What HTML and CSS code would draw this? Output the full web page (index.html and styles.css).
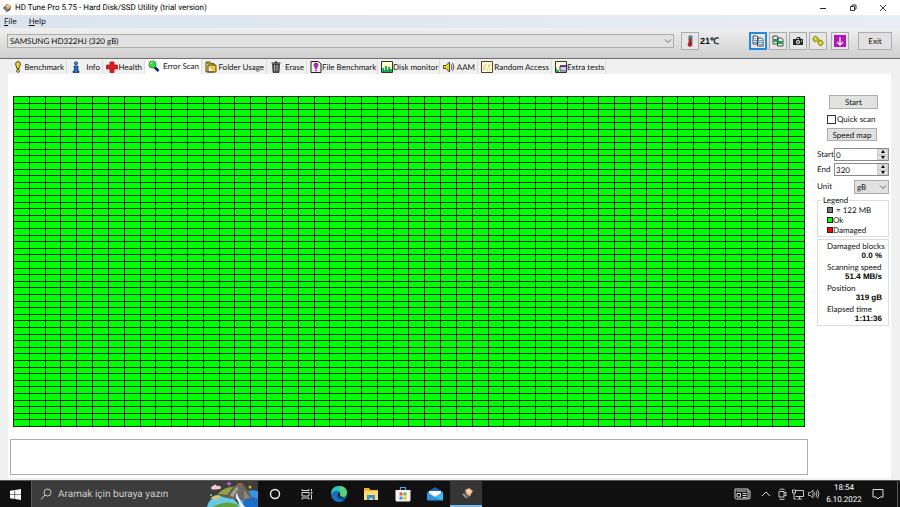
FILE: index.html
```
<!DOCTYPE html>
<html lang="tr">
<head>
    <meta charset="UTF-8">
    <meta name="viewport" content="width=device-width, initial-scale=1.0">
    <title>HD Tune Pro</title>
    <link rel="stylesheet" href="styles.css">
</head>
<body>
    <header class="titlebar">
        <svg class="app-icon" viewBox="0 0 10 10">
            <path d="M1 5 5 1l4 2-1 4-3 2z" fill="#3c332c"/>
            <path d="M3 3 6 1l3 2-3 4z" fill="#e9bd85"/>
            <path d="M1 5l2-1 3 3-1 2z" fill="#8b8378"/>
        </svg>
        <h1>HD Tune Pro 5.75 - Hard Disk/SSD Utility (trial version)</h1>
        <div class="window-buttons">
            <button aria-label="Minimize"><svg viewBox="0 0 10 10"><path d="M2 5.5h6" stroke="#222"/></svg></button>
            <button aria-label="Restore"><svg viewBox="0 0 10 10"><path d="M2.5 3.5h4v4h-4zM4 3.500V2h4v4H6.500" fill="none" stroke="#222" stroke-width=".9"/></svg></button>
            <button aria-label="Close"><svg viewBox="0 0 10 10"><path d="M2 2l6 6M8 2L2 8" stroke="#222" stroke-width=".9"/></svg></button>
        </div>
    </header>

    <nav class="menubar">
        <a href="#"><u>F</u>ile</a>
        <a href="#"><u>H</u>elp</a>
    </nav>

    <div class="toolbar">
        <div class="select-wrap drive">
            <select aria-label="Drive">
                <option>SAMSUNG HD322HJ (320 gB)</option>
            </select>
            <svg viewBox="0 0 8 8"><path d="M1 2.500l3 3 3-3" fill="none" stroke="#555" stroke-width=".8"/></svg>
        </div>
        <button class="tool" aria-label="Temperature">
            <svg viewBox="0 0 12 12"><path d="M5 1h3v7H5z" fill="#38bfc4" stroke="#222" stroke-width=".6"/><path d="M5 3h2v6H5z" fill="#d31818"/><circle cx="6" cy="9.500" r="2" fill="#d31818" stroke="#501010" stroke-width=".5"/></svg>
        </button>
        <strong class="temperature">21℃</strong>
        <div class="tools">
            <button class="tool selected" aria-label="Copy text">
                <svg viewBox="0 0 12 12"><path d="M1 1h4l1 1v7H1zM5.500 3h4l1.500 1.500V11H5.500z" fill="#eef7ff" stroke="#222" stroke-width=".8"/><path d="M2 3.500h2M2 5.500h3M2 7.500h3M7 5.500h3M7 7.500h3M7 9.500h3" stroke="#2688dd" stroke-width=".8"/></svg>
            </button>
            <button class="tool" aria-label="Copy screenshot">
                <svg viewBox="0 0 12 12"><path d="M1 1h4l1 1v7H1zM5.500 3h4l1.500 1.500V11H5.500z" fill="#eee" stroke="#222" stroke-width=".8"/><path d="M1.500 4h4v3h-4zM6 6h4.500v3H6z" fill="#1ca83a"/><path d="M2 4h2v1H2zM7 6h2v1H7z" fill="#2470c8"/></svg>
            </button>
            <button class="tool" aria-label="Save screenshot">
                <svg viewBox="0 0 12 12"><path d="M1 4h3l1-2h3l1 2h2v6H1z" fill="#292929"/><path d="M5 3h2v1H5z" fill="#ddd"/><circle cx="6" cy="7" r="2" fill="#eee"/><circle cx="6" cy="7" r="1" fill="#444"/><path d="M9 5h1v2H9z" fill="#3dd33d"/></svg>
            </button>
            <button class="tool" aria-label="Options">
                <svg viewBox="0 0 12 12"><path d="M1 3l2-2 2 1 2 2-1 2-3 1-2-2zM6 6l3-1 2 2v2L9 11 6 9z" fill="#c6bd14" stroke="#77720c" stroke-width=".7"/><path d="M4 5l4 3" stroke="#c6bd14" stroke-width="2"/><circle cx="3.500" cy="3.500" r="1" fill="#f1eda0"/><circle cx="8.500" cy="8" r="1" fill="#f1eda0"/></svg>
            </button>
            <button class="tool update" aria-label="Update">
                <svg viewBox="0 0 12 12"><path d="M0 0h12v12H0z" fill="#b414b8"/><path d="M6 2v8M3 7l3 3 3-3" fill="none" stroke="#fff" stroke-width="1.300"/></svg>
            </button>
        </div>
        <button class="exit">Exit</button>
    </div>

    <nav class="tabs">
        <a href="#"><svg viewBox="0 0 12 12"><path d="M3.500 3Q4 .5 6 .5T8.500 3L7 7.500H5z" fill="#e8dc20" stroke="#222" stroke-width=".8"/><circle cx="6" cy="9.800" r="1.500" fill="#e8dc20" stroke="#222" stroke-width=".7"/></svg>Benchmark</a>
        <a href="#"><svg viewBox="0 0 12 12"><circle cx="6" cy="2.300" r="1.600" fill="#1d8be6" stroke="#123" stroke-width=".6"/><path d="M4 5h4v5h1v1.500H3V10h1.500V6.500H4z" fill="#1d70d8" stroke="#123" stroke-width=".7"/></svg>Info</a>
        <a href="#"><svg viewBox="0 0 12 12"><path d="M4 1h4v3h3.500v4H8v3.500H4V8H.5V4H4z" fill="#e01c20" stroke="#8c1518" stroke-width=".7"/></svg>Health</a>
        <a href="#" class="active"><svg viewBox="0 0 12 12"><path d="M6.500 7l4 4" stroke="#10208a" stroke-width="2.600"/><circle cx="4.500" cy="4.500" r="3.600" fill="#35df42" stroke="#2a7b36" stroke-width=".8"/><path d="M2.500 4q0-1.500 2-2" fill="none" stroke="#c6ffc8"/></svg>Error Scan</a>
        <a href="#"><svg viewBox="0 0 12 12"><path d="M1 3V1h4l1 1.500h3V4" fill="#b29a1c" stroke="#4c4210" stroke-width=".8"/><path d="M1 3v8h8M3 4h8v7H3z" fill="#eccb34" stroke="#4c4210" stroke-width=".9"/></svg>Folder Usage</a>
        <a href="#"><svg viewBox="0 0 12 12"><path d="M1.500 2h9M5 1h2" stroke="#222" stroke-width="1.200"/><path d="M2.500 3h7L9 11.500H3z" fill="#555" stroke="#222" stroke-width=".7"/><path d="M4.500 4v6M7 4v6" stroke="#bbb" stroke-width=".8"/></svg>Erase</a>
        <a href="#"><svg viewBox="0 0 12 12"><path d="M1 .5h7.500L11 3v8.500H1z" fill="#eee" stroke="#222"/><path d="M4 4q0-2 2-2t2 2L6.500 7.500h-1z" fill="#c41bc8" stroke="#551058" stroke-width=".6"/><circle cx="6" cy="9.500" r="1" fill="#c41bc8"/></svg>File Benchmark</a>
        <a href="#"><svg viewBox="0 0 12 12"><path d="M.5.5h11v11H.5z" fill="#ffffd0" stroke="#333"/><path d="M1 11V7h2v2h1V5h2v4h1V6h2v2h2v3z" fill="#16bd2c"/><path d="M2 9h1v2H2zM5 8h1v3H5zM8 8h1v3H8z" fill="#2366dd"/></svg>Disk monitor</a>
        <a href="#"><svg viewBox="0 0 12 12"><path d="M.5 4.500H3L6.500 1v10L3 7.500H.5z" fill="#e1d51b" stroke="#222" stroke-width=".8"/><path d="M8 3.500q2 2.500 0 5M9.500 2q3 4 0 8" fill="none" stroke="#222" stroke-width=".8"/></svg>AAM</a>
        <a href="#"><svg viewBox="0 0 12 12"><path d="M.5.5h11v11H.5z" fill="#fff9cf" stroke="#444"/><path d="M2 9l2-2M4 4h1M7 6l2-3M3 6h1M8 8h1M6 9h1" stroke="#e39a3a"/></svg>Random Access</a>
        <a href="#"><svg viewBox="0 0 12 12"><path d="M.5.5h11v11H.5z" fill="#ffffd0" stroke="#333"/><path d="M1 11V7h1v2h2v2z" fill="#16bd2c"/><path d="M5 5h6.500v5H5z" fill="#edc3cc" stroke="#1d2d9d" stroke-width=".9"/><path d="M5 5h6.500" stroke="#1d2d9d" stroke-width="1.500"/></svg>Extra tests</a>
    </nav>

    <main class="panel">
        <section class="scan">
            <div class="blocks" id="blocks"></div>
            <div class="log"></div>
        </section>

        <aside class="sidebar">
            <button class="start">Start</button>
            <label class="quick"><input type="checkbox"> Quick scan</label>
            <button class="speed">Speed map</button>

            <div class="field">
                <label for="start">Start</label>
                <div class="spinner">
                    <input id="start" type="text" value="0">
                    <div class="arrows">
                        <button aria-label="Start up"><svg viewBox="0 0 6 4"><path d="M3 0l2 3H1z"/></svg></button>
                        <button aria-label="Start down"><svg viewBox="0 0 6 4"><path d="M3 4l2-3H1z"/></svg></button>
                    </div>
                </div>
            </div>
            <div class="field">
                <label for="end">End</label>
                <div class="spinner">
                    <input id="end" type="text" value="320">
                    <div class="arrows">
                        <button aria-label="End up"><svg viewBox="0 0 6 4"><path d="M3 0l2 3H1z"/></svg></button>
                        <button aria-label="End down"><svg viewBox="0 0 6 4"><path d="M3 4l2-3H1z"/></svg></button>
                    </div>
                </div>
            </div>
            <div class="field unit">
                <label for="unit">Unit</label>
                <div class="select-wrap">
                    <select id="unit">
                        <option>gB</option>
                    </select>
                    <svg viewBox="0 0 8 8"><path d="M1 2.500l3 3 3-3" fill="none" stroke="#444" stroke-width=".8"/></svg>
                </div>
            </div>

            <fieldset class="legend">
                <legend>Legend</legend>
                <ul>
                    <li class="size"><i class="gray"></i>= 122 MB</li>
                    <li><i class="green"></i>Ok</li>
                    <li><i class="red"></i>Damaged</li>
                </ul>
            </fieldset>

            <dl class="stats">
                <dt>Damaged blocks</dt>
                <dd>0.0 %</dd>
                <dt>Scanning speed</dt>
                <dd>51.4 MB/s</dd>
                <dt>Position</dt>
                <dd>319 gB</dd>
                <dt>Elapsed time</dt>
                <dd>1:11:36</dd>
            </dl>
        </aside>
    </main>

    <footer class="taskbar">
        <button class="win" aria-label="Başlat"><svg viewBox="0 0 12 12"><path d="M0 2l5-.8v4.500H0zM5.600 1.100L12 0v5.700H5.600zM0 6.300h5v4.500L0 10zM5.600 6.300H12V12l-6.400-1z" fill="#fff"/></svg></button>
        <div class="search">
            <svg class="lens" viewBox="0 0 12 12"><circle cx="7.500" cy="4.500" r="3.500" fill="none" stroke="#ccc"/><path d="M5 7l-4 4.500" stroke="#ccc"/></svg>
            <input type="text" placeholder="Aramak için buraya yazın" aria-label="Ara">
            <svg class="scene" viewBox="0 0 51 26">
                <path d="M35 12q8-4 16-2v16H32z" fill="#3597e3"/>
                <path d="M38 18q7-4 13 0v8H34z" fill="#1c6fc6"/>
                <path d="M0 26q1-8 12-12l14 3 8 9z" fill="#68c8e8"/>
                <path d="M3 17q6-4 12-3l-5 5z" fill="#d4c37a"/>
                <path d="M10 13q6-6 16-8l10-2 5 6 4 8q-6 3-14 1-12 0-20-4z" fill="#596047"/>
                <path d="M11 13q6-7 15-7l-6 8z" fill="#91a340"/>
                <path d="M20 17l11-15h4l4 8 6 7-12 1z" fill="#6d6561"/>
                <path d="M23 14l7-9 1 3-5 8z" fill="#a8a29a"/>
                <path d="M31 2h4l1 3-3-1-3 1z" fill="#b8553d"/>
                <path d="M33 8q-4 3-2 7t7 11h-5q-1-5-4-9-1-4 4-9z" fill="#e5edf0"/>
                <path d="M7 25q11-6 22-2l3 3H6z" fill="#61a43b"/>
                <path d="M37 9l6 8-6 1z" fill="#8d8680"/>
                <path d="M4 7q0-2 2-2 2-3 4 0 4-1 4 2 0 1-5 1.500T4 7z" fill="#f0c6cf"/>
                <path d="M22 0l1 2 2 .5-2 1-1 2-1-2-2-1 2-.5z" fill="#c65fe5"/>
                <circle cx="43" cy="6" r="1.500" fill="#f1aa13"/>
                <circle cx="4" cy="14" r="1" fill="#61d7dd"/>
            </svg>
        </div>
        <div class="apps">
            <button aria-label="Cortana"><svg viewBox="0 0 16 16"><circle cx="8" cy="8" r="4.500" fill="none" stroke="#eee" stroke-width="1.400"/></svg></button>
            <button aria-label="Görev Görünümü"><svg viewBox="0 0 16 16"><path d="M3 3v1.500h7V3M3 6.500h7v3.500H3zM3 13.500V12h7v1.500M12.500 3v2M12.500 8.500v5" fill="none" stroke="#ddd"/><circle cx="12.500" cy="6.800" r="1" fill="#ddd"/></svg></button>
            <button aria-label="Edge"><svg viewBox="0 0 16 16"><circle cx="8" cy="8" r="8" fill="#1771bd"/><path d="M0 7Q1 0 8 0q7 0 8 6 0 5-5 5-3 0-2-2 1-3-2-4Q3 4 0 8z" fill="#2fc2bd"/><path d="M9 0q7 1 7 7-1 4-5 4-3 0-2-2 2-4-1-6z" fill="#5ad375"/><path d="M6 7q-3 6 7 7 2-1 2-3-3 2-6 1Q5 11 6 7z" fill="#124b99"/><path d="M7 7q2-1 2 1-1 3 4 3-4 2-6-1z" fill="#101010"/></svg></button>
            <button aria-label="Dosya Gezgini"><svg viewBox="0 0 16 16"><path d="M1 2h5l1.500 2H15v10H1z" fill="#f0b52f"/><path d="M1 5h14v9H1z" fill="#ffdc70"/><path d="M4 14V9h8v5h-2.500v-2h-3v2z" fill="#3e91d5"/></svg></button>
            <button aria-label="Store"><svg viewBox="0 0 16 16"><path d="M5.500 4V1.500h5V4" fill="none" stroke="#3bb0ed" stroke-width="1.200"/><path d="M.5 4h15v10q0 1.500-1.500 1.500H2Q.5 15.500.5 14z" fill="#f4f4f4"/><path d="M4.500 6.500h3v3h-3z" fill="#ee5238"/><path d="M8.500 6.500h3v3h-3z" fill="#75b82e"/><path d="M4.500 10.500h3v3h-3z" fill="#27a0e5"/><path d="M8.500 10.500h3v3h-3z" fill="#f6b91c"/></svg></button>
            <button aria-label="Posta"><svg viewBox="0 0 16 16"><path d="M0 6l8-5 8 5v8H0z" fill="#1265ae"/><path d="M2 5h12v6H2z" fill="#fff"/><path d="M0 6l8 5 8-5v8.500H0z" fill="#2795e5"/><path d="M8 11l8-5v8.500z" fill="#46b5f4"/></svg></button>
            <button class="running" aria-label="HD Tune Pro"><svg viewBox="0 0 16 16"><path d="M3 8l4-3 5 4-3 4-3-1z" fill="#5d5650"/><path d="M6 4l4-2 4 3-3 5-3-1z" fill="#e3b37d"/><circle cx="10" cy="5.500" r="2" fill="#f7dcbc"/><path d="M3 8l2 0 3 3-1 1z" fill="#a9a39c"/></svg></button>
        </div>
        <div class="tray">
            <svg class="news" viewBox="0 0 16 12"><path d="M.5 1h13v10H2Q.5 11 .5 9.500zM13.500 3h2v7q0 1-1.500 1" fill="none" stroke="#ddd"/><path d="M2 3h10M8 5.500h4M8 7.500h4M8 9.500h4" stroke="#ddd"/><path d="M2.500 5.500H6v3.500H2.500z" fill="none" stroke="#ddd"/></svg>
            <svg viewBox="0 0 12 12"><path d="M2 8l4-4 4 4" fill="none" stroke="#ddd"/></svg>
            <svg viewBox="0 0 12 12"><path d="M3 3.500h5v5.500H3zM8 5l2-1v4L8 7M3.500 1.500q2.500-1 5 0M3.500 11q2.500 1 5 0" fill="none" stroke="#ddd" stroke-width=".9"/></svg>
            <svg viewBox="0 0 12 12"><path d="M3.500 2.500h8v6h-8M5 11h5M7.500 8.500V11M.5 2h3v3h-3zM2 5v6h2" fill="none" stroke="#ddd" stroke-width=".9"/></svg>
            <svg viewBox="0 0 12 12"><path d="M.5 4.500h2L5 2v8L2.500 7.500h-2zM6.500 4.500q1 1.500 0 3M8 3q2 3 0 6M9.500 1.500q3 4.500 0 9" fill="none" stroke="#ddd" stroke-width=".8"/></svg>
            <div class="clock">
                <span>18:54</span>
                <span>6.10.2022</span>
            </div>
            <svg class="notice" viewBox="0 0 12 12"><path d="M1 1.500h10v7.500H8L6 11 4 9H1z" fill="none" stroke="#ddd"/></svg>
        </div>
    </footer>

    <script>
        // 50 x 50 surface map, every block scanned ok
        const blocks = document.getElementById('blocks');
        for (let i = 0; i < 50 * 50; i++) {
            blocks.appendChild(document.createElement('span'));
        }
    </script>
</body>
</html>
```
FILE: styles.css
```
* {
    margin: 0;
    padding: 0;
    box-sizing: border-box;
}

body {
    min-height: 100vh;
    display: flex;
    flex-direction: column;
    background-color: #f0f0f0;
    color: #111;
    font-family: Lato, "Liberation Sans", sans-serif;
    font-size: 8px;
    line-height: 10px;
    text-rendering: geometricPrecision;
}

svg {
    display: block;
    flex: none;
}

a {
    color: inherit;
    text-decoration: none;
}

button,
input,
select {
    font: inherit;
    color: inherit;
    text-rendering: inherit;
}

button {
    border: 1px solid #adadad;
    background-color: #e1e1e1;
}

/* Title and menu */

.titlebar {
    display: flex;
    align-items: center;
    height: 15px;
    padding-left: 2px;
    background-color: #fff;
}

.app-icon {
    width: 10px;
    height: 10px;
}

.titlebar h1 {
    flex: 1;
    margin-left: 3px;
    font-family: Roboto, sans-serif;
    font-size: 8px;
    font-weight: normal;
    color: #000;
}

.window-buttons {
    display: flex;
    margin-right: 2px;
}

.window-buttons button {
    display: flex;
    align-items: center;
    justify-content: center;
    width: 30px;
    height: 14px;
    border: none;
    background: none;
}

.window-buttons svg {
    width: 10px;
    height: 10px;
}

.menubar {
    display: flex;
    gap: 12px;
    height: 13px;
    padding: 2px 4px;
    background: linear-gradient(to right, #dbe4ed, #e9edf5);
    font-family: "Open Sans", sans-serif;
    color: #000;
}

/* Toolbar */

.toolbar {
    display: flex;
    align-items: center;
    height: 31px;
    padding: 0 8px 4px 7px;
    border-bottom: 1px solid #6c6c6c;
    background: linear-gradient(#f0f0f0, #cfcfcf);
}

.select-wrap {
    position: relative;
}

.select-wrap select {
    display: block;
    width: 100%;
    height: 14px;
    padding-left: 2px;
    appearance: none;
    border: 1px solid #adadad;
    border-radius: 0;
    background-color: #e1e1e1;
}

.select-wrap svg {
    position: absolute;
    top: 3px;
    right: 2px;
    width: 8px;
    height: 8px;
    pointer-events: none;
}

.drive {
    flex: 1;
}

.tool {
    display: flex;
    align-items: center;
    justify-content: center;
    width: 18px;
    height: 18px;
    background-color: #e6e6e6;
}

.tool svg {
    width: 12px;
    height: 12px;
}

.drive + .tool {
    margin-left: 7px;
}

.tool.selected {
    border: 2px solid #2389dc;
}

.tool.update {
    margin-left: 2px;
}

.temperature {
    width: 49px;
    margin-left: 1px;
    font-family: "Liberation Sans", sans-serif;
    font-size: 9px;
    color: #111;
}

.tools {
    display: flex;
    gap: 2px;
}

.exit {
    width: 34px;
    height: 18px;
    margin-left: 9px;
}

/* Tabs */

.tabs {
    display: grid;
    grid-template-columns: 58px 36px 42px 57px 65px 40px 71px 62px 38px 74px 54px;
    height: 15px;
    padding-left: 9px;
}

.tabs a {
    display: flex;
    align-items: center;
    justify-content: space-between;
    margin-top: 1px;
    padding: 0 2px 0 3px;
    border-right: 1px solid #dcdcdc;
    white-space: nowrap;
}

.tabs svg {
    width: 12px;
    height: 12px;
}

.tabs .active {
    margin-top: 0;
    padding-bottom: 2px;
    background-color: #fff;
}

/* Scan panel */

.panel {
    flex: 1;
    display: flex;
    margin: 0 9px 2px 8px;
    padding-right: 2px;
    background-color: #fff;
}

.scan {
    flex: 1;
    display: flex;
    flex-direction: column;
    padding: 22px 9px 3px 2px;
}

.blocks {
    flex: 1;
    display: grid;
    grid-template-columns: repeat(50, 1fr);
    grid-template-rows: repeat(50, 1fr);
    margin: 0 3px;
    border-top: 1px solid #053005;
    border-left: 1px solid #053005;
    background-color: #0f0;
}

.blocks span {
    border-right: 1px solid #053005;
    border-bottom: 1px solid #053005;
}

.log {
    height: 36px;
    margin-top: 12px;
    border: 1px solid #aaabb3;
}

.sidebar {
    display: flex;
    flex-direction: column;
    width: 72px;
    padding-top: 21px;
}

.start {
    width: 49px;
    height: 14px;
    margin-left: 12px;
}

.quick {
    display: flex;
    align-items: center;
    gap: 1px;
    margin: 5px 0 4px 10px;
    white-space: nowrap;
}

.quick input {
    width: 9px;
    height: 9px;
    appearance: none;
    border: 1px solid #333;
    background-color: #fff;
}

.speed {
    width: 50px;
    height: 13px;
    margin: 0 0 7px 10px;
}

.field {
    display: flex;
    justify-content: space-between;
    margin-bottom: 2px;
}

.field label {
    padding-top: 1px;
}

.spinner {
    display: flex;
    flex: none;
    width: 55px;
    height: 13px;
    border: 1px solid #8a8a8a;
}

.spinner input {
    flex: 1;
    min-width: 0;
    padding-left: 1px;
    border: none;
}

.arrows {
    display: flex;
    flex-direction: column;
    width: 11px;
}

.arrows button {
    display: flex;
    flex: 1;
    align-items: center;
    justify-content: center;
    min-height: 0;
    border-color: #ccc;
}

.arrows svg {
    width: 6px;
    height: 4px;
}

.unit {
    margin: 2px 0 0;
}

.unit .select-wrap {
    width: 35px;
}

.legend {
    margin-top: 1px;
    padding: 0 0 1px 9px;
    border: 1px solid #dcdcdc;
}

.legend legend {
    margin-left: -5px;
    padding: 0 1px;
}

.legend ul {
    list-style: none;
}

.legend li {
    display: flex;
    align-items: center;
    height: 10px;
}

.legend .size {
    gap: 3px;
}

.legend i {
    width: 6px;
    height: 6px;
    border: 1px solid #222;
}

.gray {
    background-color: #808080;
}

.green {
    background-color: #0f0;
}

.red {
    background-color: #f00;
}

.stats {
    margin-top: 2px;
    padding: 1px 6px 0 9px;
    border: 1px solid #dcdcdc;
}

.stats dt {
    white-space: nowrap;
}

.stats dd {
    height: 11px;
    font-family: "Liberation Sans", sans-serif;
    font-weight: bold;
    text-align: right;
    color: #000;
}

/* Taskbar */

.taskbar {
    display: flex;
    height: 27px;
    border-top: 1px solid #555;
    background-color: #101010;
    color: #fff;
    font-family: Roboto, sans-serif;
}

.taskbar button {
    display: flex;
    align-items: center;
    justify-content: center;
    border: none;
    background: none;
}

.win {
    width: 31px;
}

.win svg {
    width: 11px;
    height: 11px;
}

.search {
    display: flex;
    align-items: center;
    width: 227px;
    padding-left: 8px;
    border-left: 1px solid #555;
    background-color: #3c3c3c;
}

.lens {
    width: 12px;
    height: 12px;
}

.search input {
    flex: 1;
    min-width: 0;
    margin-left: 6px;
    border: none;
    background: none;
    font-size: 10px;
}

.search input::placeholder {
    color: #ccc;
    opacity: 1;
}

.scene {
    width: 51px;
    height: 26px;
}

.apps {
    display: flex;
}

.apps button {
    width: 32px;
    padding: 2px 0 0 2px;
    border-bottom: 2px solid transparent;
}

.apps svg {
    width: 16px;
    height: 16px;
}

.taskbar .running {
    border-bottom: 2px solid #76b9ed;
    background-color: #353535;
}

.tray {
    display: flex;
    align-items: center;
    gap: 4px;
    margin-left: auto;
    margin-right: 2px;
    padding-right: 13px;
    border-right: 1px solid #555;
}

.tray svg {
    width: 12px;
    height: 12px;
}

.tray .news {
    width: 17px;
    margin-right: 5px;
}

.clock {
    display: flex;
    flex-direction: column;
    gap: 2px;
    width: 40px;
    text-align: center;
}

.tray .notice {
    margin-left: 4px;
}
```
